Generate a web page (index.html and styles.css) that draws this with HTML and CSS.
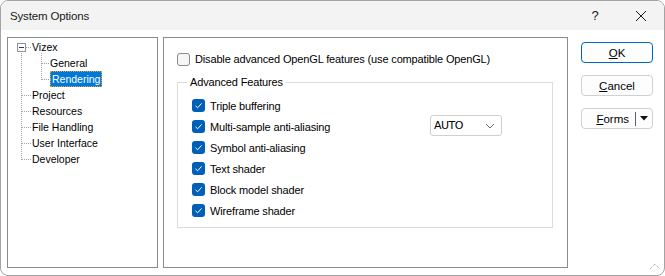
FILE: index.html
```html
<!DOCTYPE html>
<html lang="en">
<head>
  <meta charset="UTF-8" />
  <title>System Options</title>
  <link rel="stylesheet" href="styles.css">
</head>
<body>

<div class="window">
  <div class="titlebar">
    <span class="title">System Options</span>
    <span class="tb-btn">?</span>
    <span class="tb-btn">
      <svg width="12" height="12" viewBox="0 0 12 12"><path d="M1 1 L11 11 M11 1 L1 11" stroke="#1a1a1a" stroke-width="1"/></svg>
    </span>
  </div>

  <div class="content">
    <!-- tree -->
    <div class="tree">
      <svg class="tree-lines" width="149" height="229">
        <g stroke="#a0a0a0" stroke-dasharray="1 1" shape-rendering="crispEdges">
          <path d="M18 9.5 H23"/>
          <path d="M13.5 15 V122"/>
          <path d="M14 57.5 H23 M14 73.5 H23 M14 89.5 H23 M14 105.5 H23 M14 121.5 H23"/>
          <path d="M33.5 15 V42"/>
          <path d="M34 25.5 H43 M34 41.5 H43"/>
        </g>
        <rect x="9.5" y="5.5" width="8" height="8" fill="#fff" stroke="#919191" shape-rendering="crispEdges"/>
        <path d="M11 9.5 H16" stroke="#1a3a8a" shape-rendering="crispEdges"/>
      </svg>
      <div class="node">Vizex</div>
      <div class="node child">General</div>
      <div class="node child"><span class="selected">Rendering</span></div>
      <div class="node">Project</div>
      <div class="node">Resources</div>
      <div class="node">File Handling</div>
      <div class="node">User Interface</div>
      <div class="node">Developer</div>
    </div>

    <!-- settings panel -->
    <div class="panel">
      <div class="check-row">
        <span class="box"></span>
        <span>Disable advanced OpenGL features (use compatible OpenGL)</span>
      </div>

      <div class="group">
        <span class="group-title">Advanced Features</span>
        <div class="check-row opt">
          <span class="box checked"><svg width="13" height="13" viewBox="0 0 13 13"><path d="M3.5 6.8 L5.6 8.8 L9.6 4.4" fill="none" stroke="#fff" stroke-width="1"/></svg></span>
          <span>Triple buffering</span>
        </div>
        <div class="check-row opt">
          <span class="box checked"><svg width="13" height="13" viewBox="0 0 13 13"><path d="M3.5 6.8 L5.6 8.8 L9.6 4.4" fill="none" stroke="#fff" stroke-width="1"/></svg></span>
          <span>Multi-sample anti-aliasing</span>
          <div class="combo">
            <span>AUTO</span>
            <svg width="10" height="6" viewBox="0 0 10 6"><path d="M1 1 L5 5 L9 1" fill="none" stroke="#707070" stroke-width="1"/></svg>
          </div>
        </div>
        <div class="check-row opt">
          <span class="box checked"><svg width="13" height="13" viewBox="0 0 13 13"><path d="M3.5 6.8 L5.6 8.8 L9.6 4.4" fill="none" stroke="#fff" stroke-width="1"/></svg></span>
          <span>Symbol anti-aliasing</span>
        </div>
        <div class="check-row opt">
          <span class="box checked"><svg width="13" height="13" viewBox="0 0 13 13"><path d="M3.5 6.8 L5.6 8.8 L9.6 4.4" fill="none" stroke="#fff" stroke-width="1"/></svg></span>
          <span>Text shader</span>
        </div>
        <div class="check-row opt">
          <span class="box checked"><svg width="13" height="13" viewBox="0 0 13 13"><path d="M3.5 6.8 L5.6 8.8 L9.6 4.4" fill="none" stroke="#fff" stroke-width="1"/></svg></span>
          <span>Block model shader</span>
        </div>
        <div class="check-row opt">
          <span class="box checked"><svg width="13" height="13" viewBox="0 0 13 13"><path d="M3.5 6.8 L5.6 8.8 L9.6 4.4" fill="none" stroke="#fff" stroke-width="1"/></svg></span>
          <span>Wireframe shader</span>
        </div>
      </div>
    </div>

    <!-- buttons -->
    <div class="buttons">
      <button class="btn default"><u>O</u>K</button>
      <button class="btn"><u>C</u>ancel</button>
      <button class="btn split">
        <span class="split-label"><u>F</u>orms</span>
        <span class="split-arrow"><svg width="8" height="5" viewBox="0 0 8 5"><path d="M0 0 H8 L4 4.5 Z" fill="#111"/></svg></span>
      </button>
    </div>
  </div>

  <svg class="grip" width="12" height="8" viewBox="0 0 12 8">
    <path d="M1 7 L6 2 L11 7" fill="none" stroke="#9a9a9a" stroke-width="1" stroke-dasharray="1 1"/>
  </svg>
</div>

</body>
</html>
```

FILE: styles.css
```css
body {
  margin: 0;
  padding: 0;
  background: #ffffff;
  font-family: "Liberation Sans", Arial, sans-serif;
  font-size: 11px;
  letter-spacing: -0.15px;
  color: #000;
}

.window {
  position: relative;
  box-sizing: border-box;
  width: 665px;
  height: 276px;
  border: 1px solid #a3a3a3;
  border-radius: 8px;
  background: #ffffff;
  overflow: hidden;
}

.titlebar {
  height: 29px;
  background: #f3f3f3;
  display: flex;
  align-items: center;
  padding-left: 9px;
}

.title {
  flex: 1;
  font-size: 11.5px;
  color: #1a1a1a;
}

.tb-btn {
  width: 46px;
  display: flex;
  justify-content: center;
  align-items: center;
  font-size: 13px;
  color: #1a1a1a;
}

.content {
  display: flex;
  padding: 7px 0 0 6px;
}

/* tree */
.tree {
  position: relative;
  box-sizing: border-box;
  width: 151px;
  height: 231px;
  border: 1px solid #8b8b8b;
  padding-top: 1px;
  font-size: 10.5px;
  letter-spacing: 0;
}

.tree-lines {
  position: absolute;
  top: 0;
  left: 0;
}

.node {
  height: 16px;
  line-height: 16px;
  padding-left: 24px;
  white-space: nowrap;
}

.node.child {
  padding-left: 42px;
}

.selected {
  display: inline-block;
  height: 14px;
  line-height: 14px;
  padding: 0 1px;
  background: #0078d7;
  color: #fff;
  border: 1px dotted #f0a030;
}

/* panel */
.panel {
  box-sizing: border-box;
  width: 405px;
  height: 231px;
  margin-left: 5px;
  border: 1px solid #8b8b8b;
  padding: 13px 0 0 13px;
}

.check-row {
  display: flex;
  align-items: center;
  height: 16px;
  gap: 5px;
}

.box {
  box-sizing: border-box;
  width: 13px;
  height: 13px;
  border: 1px solid #8a8a8a;
  border-radius: 3px;
  background: #f6f6f6;
  flex-shrink: 0;
}

.box.checked {
  border: none;
  background: #005fb8;
}

.box svg {
  display: block;
}

.group {
  position: relative;
  box-sizing: border-box;
  width: 376px;
  height: 146px;
  margin-top: 15px;
  border: 1px solid #dcdcdc;
  padding: 12px 50px 0 14px;
}

.group-title {
  position: absolute;
  top: -7px;
  left: 9px;
  padding: 0 3px;
  background: #fff;
}

.check-row.opt {
  height: 21px;
}

.combo {
  box-sizing: border-box;
  width: 72px;
  height: 21px;
  margin-left: auto;
  margin-top: -2px;
  border: 1px solid #cfcfcf;
  border-radius: 3px;
  display: flex;
  align-items: center;
  justify-content: space-between;
  padding: 0 6px 0 3px;
  font-family: "DejaVu Sans", sans-serif;
  font-size: 11px;
  letter-spacing: -0.5px;
}

/* buttons */
.buttons {
  display: flex;
  flex-direction: column;
  gap: 12px;
  margin-left: 13px;
  padding-top: 5px;
}

.btn {
  box-sizing: border-box;
  width: 72px;
  height: 21px;
  border: 1px solid #d0d0d0;
  border-radius: 4px;
  background: #fdfdfd;
  font-family: "Liberation Sans", Arial, sans-serif;
  font-size: 11.5px;
  color: #000;
  padding: 0;
}

.btn.default {
  border-color: #0067c0;
}

.btn.split {
  display: flex;
  align-items: center;
  justify-content: flex-end;
}

.split-label {
  padding-right: 6px;
  border-right: 1px solid #606060;
  line-height: 14px;
}

.split-arrow {
  width: 16px;
  display: flex;
  justify-content: center;
}

.grip {
  position: absolute;
  right: 3px;
  bottom: 5px;
}
```
